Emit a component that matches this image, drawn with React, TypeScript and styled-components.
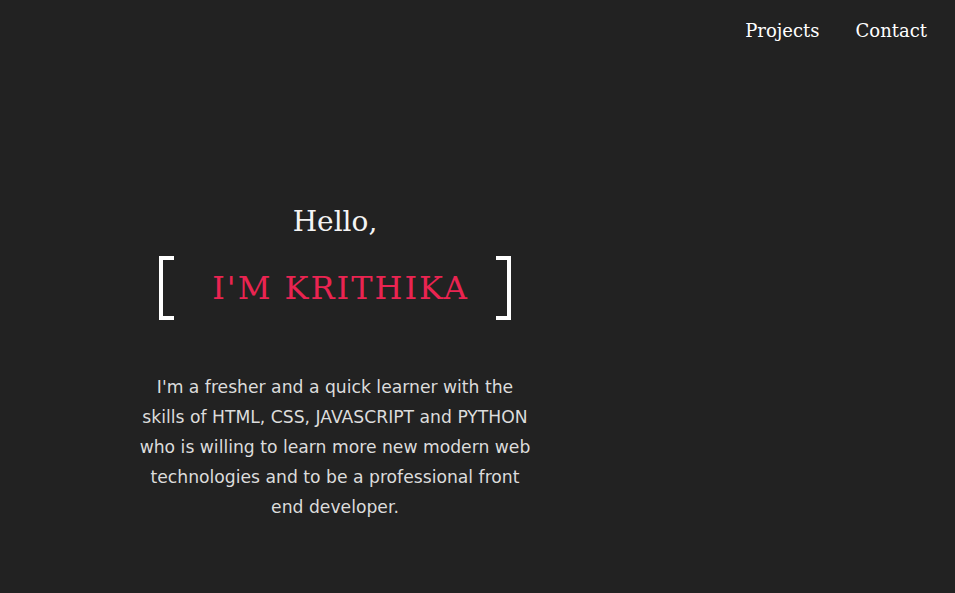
import styled, { createGlobalStyle } from "styled-components";

const GlobalStyle = createGlobalStyle`
	html, body {
		margin: 0;
		padding: 0;
		background: #222222;
	}
	body {
		height: 593px;
		overflow: hidden;
	}
`;

const Page = styled.div`
	width: 955px;
	height: 593px;
	background: #222222;
	color: #ffffff;
	display: flex;
	flex-direction: column;
`;

const Nav = styled.nav`
	display: flex;
	justify-content: flex-end;
	gap: 36px;
	padding: 20px 28px 0 0;
`;

const NavLink = styled.a`
	font-family: "DejaVu Serif", "Liberation Serif", serif;
	font-size: 18px;
	color: #ffffff;
	text-decoration: none;
	cursor: pointer;
`;

const Hero = styled.section`
	width: 400px;
	margin: 164px 0 0 135px;
	display: flex;
	flex-direction: column;
	align-items: center;
`;

const Greeting = styled.h2`
	margin: 0;
	font-family: "DejaVu Serif", "Liberation Serif", serif;
	font-weight: 400;
	font-size: 28px;
	color: #f4f4f4;
`;

const NameRow = styled.div`
	display: flex;
	align-items: center;
	margin-top: 18px;
`;

const Bracket = styled.span<{ $side: "left" | "right" }>`
	width: 11px;
	height: 56px;
	border: 4px solid #ffffff;
	${(p) => (p.$side === "left" ? "border-right: none;" : "border-left: none;")}
`;

const Name = styled.h1`
	margin: 0 27px 0 38px;
	font-family: "DejaVu Serif", "Liberation Serif", serif;
	font-weight: 400;
	font-size: 32px;
	letter-spacing: 2px;
	color: #ea2451;
`;

const About = styled.p`
	margin: 52px 0 0;
	width: 440px;
	text-align: center;
	font-family: "DejaVu Sans", "Noto Sans", sans-serif;
	font-weight: 400;
	font-size: 17.2px;
	line-height: 30px;
	color: #dcdcdc;
`;

const lines = [
	"I'm a fresher and a quick learner with the",
	"skills of HTML, CSS, JAVASCRIPT and PYTHON",
	"who is willing to learn more new modern web",
	"technologies and to be a professional front",
	"end developer.",
];

const App = () => {
	return (
		<Page>
			<GlobalStyle />
			<Nav>
				<NavLink>Projects</NavLink>
				<NavLink>Contact</NavLink>
			</Nav>
			<Hero>
				<Greeting>Hello,</Greeting>
				<NameRow>
					<Bracket $side="left" />
					<Name>I'M KRITHIKA</Name>
					<Bracket $side="right" />
				</NameRow>
				<About>
					{lines.map((line, i) => (
						<span key={i}>
							{line}
							{i < lines.length - 1 && <br />}
						</span>
					))}
				</About>
			</Hero>
		</Page>
	);
};

export default App;
